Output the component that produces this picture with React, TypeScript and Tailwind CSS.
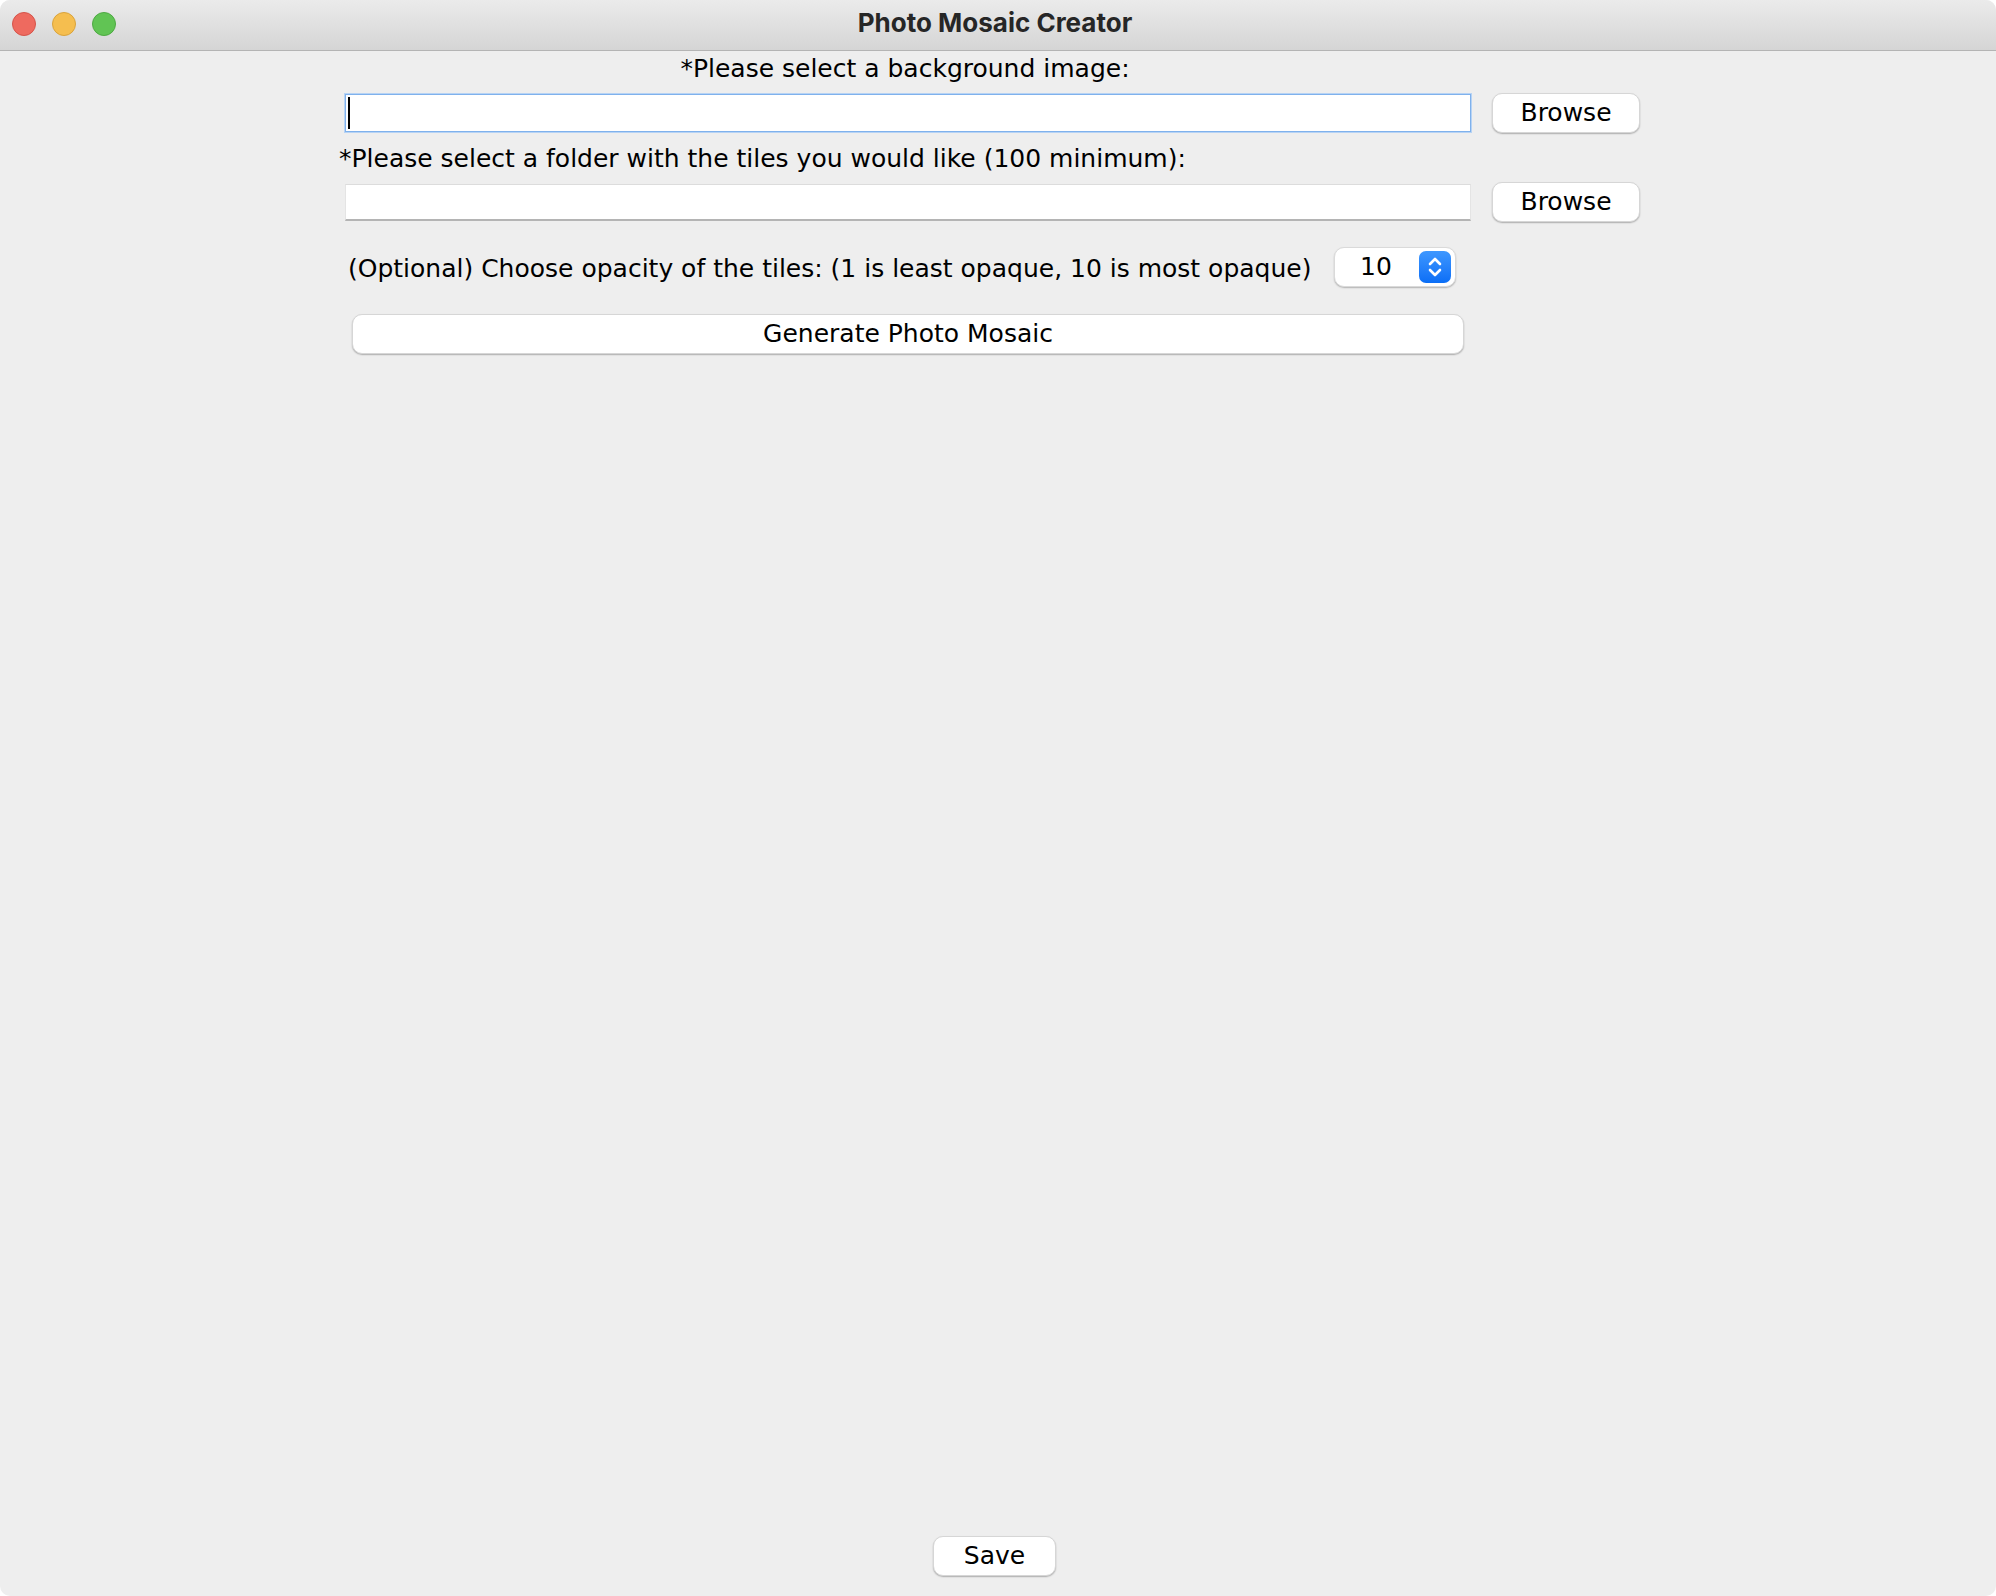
import React from "react";

function MacButton({ label, className }: { label: string; className: string }) {
  return (
    <div
      className={
        "flex items-center justify-center bg-white rounded-[10px] border border-[#d6d6d6] shadow-[0_1px_1.5px_rgba(0,0,0,0.28)] text-black text-[25px] " +
        className
      }
    >
      {label}
    </div>
  );
}

export default function App() {
  return (
    <div
      className="w-[1996px] h-[1596px] flex flex-col bg-[#eeeeee] rounded-[10px] overflow-hidden"
      style={{ fontFamily: '"DejaVu Sans", "Liberation Sans", sans-serif' }}
    >
      {/* Title bar */}
      <div className="relative h-[51px] shrink-0 bg-gradient-to-b from-[#ebebeb] to-[#d5d5d5] border-b border-[#b4b4b4] flex items-center justify-center">
        <div className="absolute left-[12px] top-[12px] flex gap-[16px]">
          <div className="w-[24px] h-[24px] rounded-full bg-[#ee6a5f] border border-[#d5544a]" />
          <div className="w-[24px] h-[24px] rounded-full bg-[#f5be4f] border border-[#d9a33c]" />
          <div className="w-[24px] h-[24px] rounded-full bg-[#61c454] border border-[#4ea943]" />
        </div>
        <div
          className="text-[26px] font-bold text-[#262626] -ml-[6px] -mt-[5px]"
          style={{ fontFamily: 'Inter, "Liberation Sans", sans-serif' }}
        >
          Photo Mosaic Creator
        </div>
      </div>

      {/* Content */}
      <div className="flex-1 flex flex-col">
        <div className="ml-[345px] w-[1295px] flex flex-col">
          <div className="w-[1120px] h-[36px] flex items-center justify-center text-[25px] text-black">
            *Please select a background image:
          </div>
          <div className="mt-[6px] flex items-start gap-[21px] h-[40px]">
            <div className="w-[1126px] h-[38px] mt-[1px] bg-white border border-[#7fb1ec] ring-1 ring-[#b7d3f4] flex items-center pl-[2px]">
              <div className="w-[2px] h-[32px] bg-black" />
            </div>
            <MacButton label="Browse" className="w-[148px] h-[40px]" />
          </div>
          <div className="-ml-[6px] mt-[8px] h-[36px] flex items-center text-[25px] text-black">
            *Please select a folder with the tiles you would like (100 minimum):
          </div>
          <div className="mt-[5px] flex items-center gap-[21px]">
            <div className="w-[1126px] h-[37px] bg-white border-t border-[#dcdcdc] border-b-2 border-b-[#b4b4b4] border-l border-l-[#e4e4e4] border-r border-r-[#e4e4e4]" />
            <MacButton label="Browse" className="w-[148px] h-[40px]" />
          </div>
          <div className="mt-[25px] flex items-center h-[40px]">
            <div className="w-[989px] pl-[3px] pt-[3px] text-[25px] text-black whitespace-nowrap">
              (Optional) Choose opacity of the tiles: (1 is least opaque, 10 is most opaque)
            </div>
            <div className="w-[122px] h-[40px] bg-white rounded-[10px] border border-[#dadada] shadow-[0_1px_1.5px_rgba(0,0,0,0.25)] flex items-center">
              <div className="flex-1 text-[25px] text-black text-center pr-[2px]">10</div>
              <div className="w-[32px] h-[32px] mr-[4px] rounded-[7px] bg-gradient-to-b from-[#3d97ff] to-[#0a6ef6] flex items-center justify-center">
                <svg width="18" height="26" viewBox="0 0 18 26" fill="none" stroke="white" strokeWidth="2.6" strokeLinecap="round" strokeLinejoin="round">
                  <path d="M4 10 L9 5 L14 10" />
                  <path d="M4 16 L9 21 L14 16" />
                </svg>
              </div>
            </div>
          </div>
          <MacButton label="Generate Photo Mosaic" className="ml-[7px] mt-[27px] w-[1112px] h-[40px]" />
        </div>
      </div>

      {/* Footer */}
      <div className="shrink-0 pb-[20px] pl-[933px] flex">
        <MacButton label="Save" className="w-[123px] h-[40px]" />
      </div>
    </div>
  );
}
